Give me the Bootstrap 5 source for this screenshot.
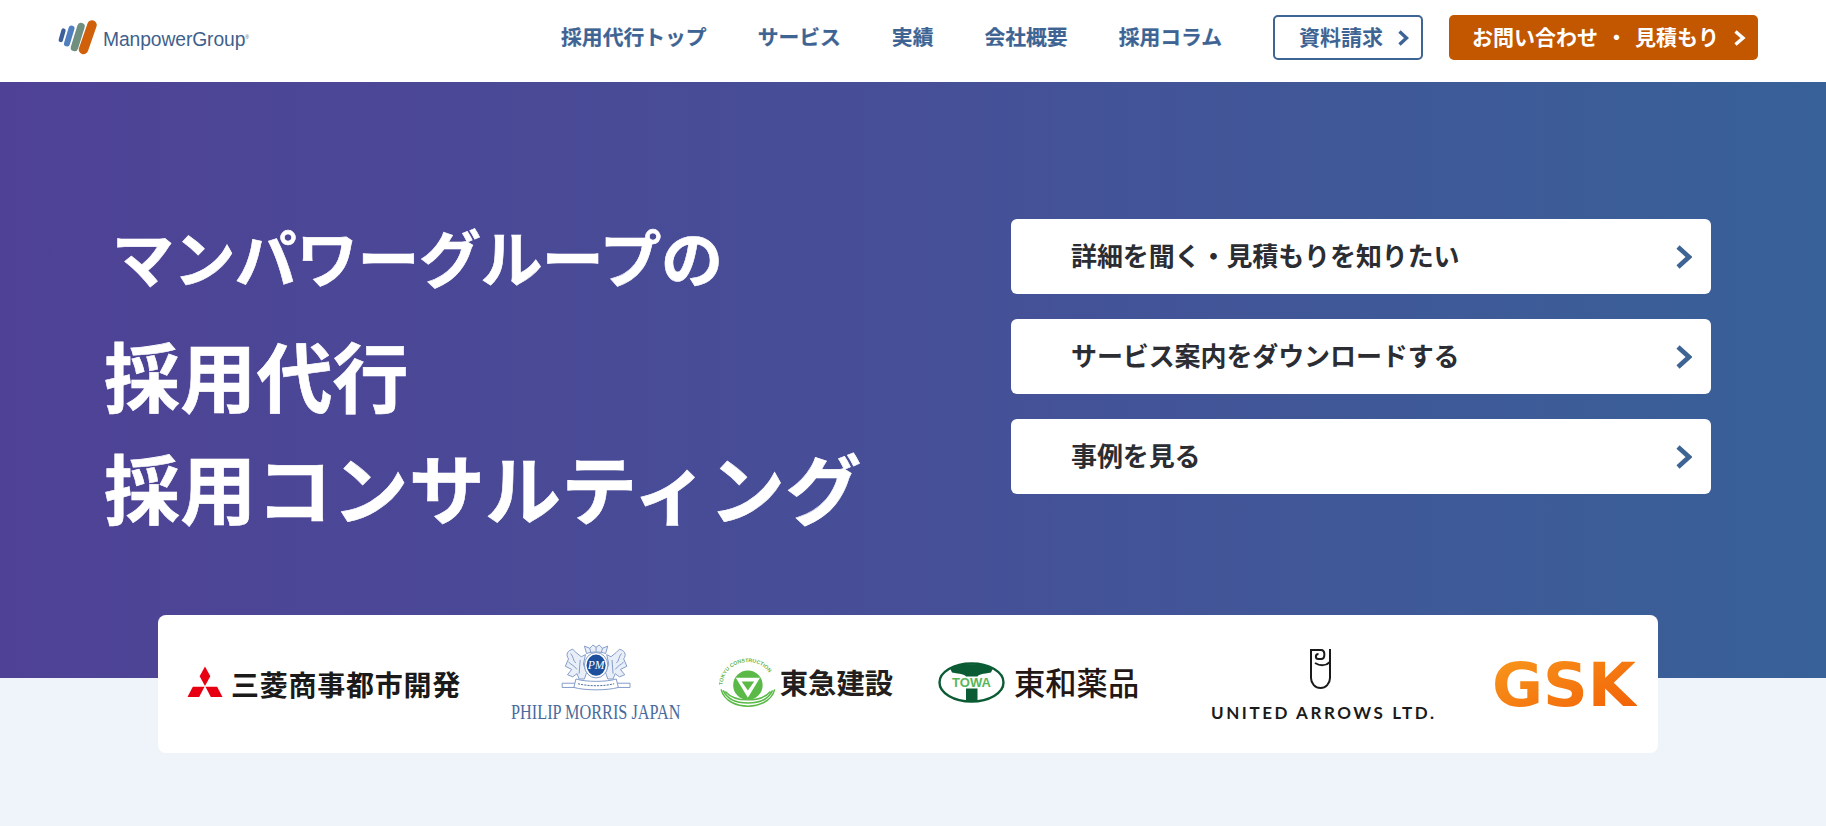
<!DOCTYPE html>
<html lang="ja">

<head>
    <meta charset="UTF-8">
    <meta name="viewport" content="width=device-width, initial-scale=1.0">
    <title>マンパワーグループの採用代行</title>
    <link href="https://cdn.jsdelivr.net/npm/bootstrap@5.3.0/dist/css/bootstrap.min.css" rel="stylesheet">
    <style>
        body { background: #eff4fb; font-family: "Noto Sans CJK JP", sans-serif; }

        .site-bar { height: 82px; padding: 15px 68px 22px 58px; align-items: center; flex-wrap: nowrap; }
        .site-brand { display: flex; align-items: flex-start; gap: 5px; margin: 0; padding: 0; }
        .brand-word { font: 19.3px "Liberation Sans", sans-serif; color: #3f5f8c; letter-spacing: -.1px; margin-top: 9px; }
        .brand-word sup { font-size: 5px; top: -1.4em; }
        .site-links { gap: 51px; margin-right: 51px; margin-bottom: 4px; }
        .site-bar.navbar-expand .site-links .nav-link { padding: 0; font-size: 20.8px; line-height: 30px; font-weight: 700; color: #3e6494; -webkit-text-stroke: .2px #3e6494; }
        .btn-doc, .btn-quote { height: 45px; font-size: 21px; font-weight: 700; border-radius: 5px; padding: 0 0 2px; display: flex; align-items: center; white-space: nowrap; }
        .btn-doc { width: 150px; border: 2px solid #3e6494; color: #3e6494; background: #fff; padding-left: 24px; }
        .btn-quote { width: 309px; margin-left: 26px; border: 0; background: #c25700; color: #fff; padding-left: 23px; }
        .btn-doc svg, .btn-quote svg { margin-left: 15px; margin-top: 2px; }

        .hero { display: flow-root; background: linear-gradient(90deg, #4f4296 0%, #464f97 50%, #386198 100%); padding-top: 137px; }
        .hero-title { margin: -3px 0 0 105px; color: #fff; font-weight: 700; -webkit-text-stroke: .6px #fff; }
        .title-sub { display: block; font-size: 62px; line-height: 80px; margin: 0 0 22px 7px; letter-spacing: -.6px; }
        .title-main { display: block; font-size: 76px; line-height: 112px; letter-spacing: .2px; margin-left: -1px; }
        .hero-links { width: 700px; margin-right: 115px; gap: 25px; }
        .hero-link { height: 75px; background: #fff; border: 0; border-radius: 6px; padding: 0 19px 0 60px; font-size: 26px; font-weight: 700; color: #2b2d33; }
        .hero-link span { position: relative; top: -2px; letter-spacing: -.1px; }
        .hero-link:hover { background: #fff; color: #2b2d33; }

        .logo-strip { width: 1500px; height: 138px; margin: 73px 0 -75px 158px; background: #fff; border-radius: 8px; position: relative; align-items: center; padding-left: 29px; }
        .logo-item { flex: none; display: flex; align-items: center; white-space: nowrap; }
        .logo-mitsu { width: 274px; gap: 8px; margin-right: 49px; font-size: 28px; font-weight: 700; letter-spacing: .75px; color: #1a1a1a; }
        .logo-mitsu svg { margin-top: -4px; }
        .logo-pm { width: 172px; margin-right: 37px; }
        .logo-tokyu { width: 174px; gap: 3px; margin-right: 45px; margin-top: -4px; font-size: 28.3px; font-weight: 700; color: #231f20; }
        .logo-towa { width: 202px; gap: 9px; margin-right: 71px; margin-top: -3px; font-size: 31.3px; font-weight: 500; color: #231815; }
        .logo-ua { width: 224px; margin-right: 57px; }
        .ua-mark { margin: 4px 6px 0 0; }
        .ua-word { margin-top: 13px; }
        .logo-gsk { width: 145px; }
    </style>
</head>

<body class="min-vh-100">
    <nav class="navbar navbar-expand bg-white site-bar">
        <a class="navbar-brand site-brand" href="#">
            <svg width="40" height="36" viewBox="0 0 40 36" fill="none" stroke-linecap="round">
                <path d="M5.500 10.500 2.800 20" stroke="#3c5f99" stroke-width="4.400" />
                <path d="M13.500 8.500 9 23.500" stroke="#4f7fbf" stroke-width="6" />
                <path d="M23 6.500 16.500 27.500" stroke="#6f8f80" stroke-width="7.500" />
                <path d="M34 5 25.500 29.500" stroke="#d0600a" stroke-width="9.500" />
            </svg>
            <span class="brand-word">ManpowerGroup<sup>®</sup></span>
        </a>
        <ul class="navbar-nav ms-auto site-links">
            <li class="nav-item"><a class="nav-link" href="#">採用代行トップ</a></li>
            <li class="nav-item"><a class="nav-link" href="#">サービス</a></li>
            <li class="nav-item"><a class="nav-link" href="#">実績</a></li>
            <li class="nav-item"><a class="nav-link" href="#">会社概要</a></li>
            <li class="nav-item"><a class="nav-link" href="#">採用コラム</a></li>
        </ul>
        <a class="btn btn-doc" href="#">資料請求
            <svg width="11" height="16" viewBox="0 0 11 16" fill="none" stroke="#3e6494" stroke-width="3.400"><path d="M1.500 1.500 8.500 8 1.500 14.500" /></svg>
        </a>
        <a class="btn btn-quote" href="#">お問い合わせ<span class="mx-2">・</span>見積もり
            <svg width="12" height="16" viewBox="0 0 12 16" fill="none" stroke="#fff" stroke-width="3.400"><path d="M1.500 1.500 9 8 1.500 14.500" /></svg>
        </a>
    </nav>

    <section class="hero">
        <div class="d-flex justify-content-between align-items-start">
            <h1 class="hero-title">
                <span class="title-sub">マンパワーグループの</span>
                <span class="title-main">採用代行</span>
                <span class="title-main">採用コンサルティング</span>
            </h1>
            <div class="d-flex flex-column hero-links">
                <a class="btn hero-link d-flex justify-content-between align-items-center" href="#"><span>詳細を聞く・見積もりを知りたい</span>
                    <svg width="16" height="24" viewBox="0 0 16 24" fill="none" stroke="#3e6494" stroke-width="4.600"><path d="M2 2 13 12 2 22" /></svg></a>
                <a class="btn hero-link d-flex justify-content-between align-items-center" href="#"><span>サービス案内をダウンロードする</span>
                    <svg width="16" height="24" viewBox="0 0 16 24" fill="none" stroke="#3e6494" stroke-width="4.600"><path d="M2 2 13 12 2 22" /></svg></a>
                <a class="btn hero-link d-flex justify-content-between align-items-center" href="#"><span>事例を見る</span>
                    <svg width="16" height="24" viewBox="0 0 16 24" fill="none" stroke="#3e6494" stroke-width="4.600"><path d="M2 2 13 12 2 22" /></svg></a>
            </div>
        </div>

        <div class="d-flex logo-strip">
            <div class="logo-item logo-mitsu">
                <svg width="37" height="32" viewBox="0 0 37 32" fill="#e60012">
                    <path d="M18.500 0 24 10 18.500 20 13 10Z" />
                    <path d="M18 21 12.500 31.500H0.500L6 21Z" />
                    <path d="M19 21H31L36.500 31.500H24.500Z" />
                </svg>
                <span>三菱商事都市開発</span>
            </div>
            <div class="logo-item logo-pm">
                <svg width="172" height="84" viewBox="0 0 172 84">
                    <g transform="translate(49 2) scale(1.060)" fill="#e9eff8" stroke="#7f98c6" stroke-width=".9">
                        <path d="M3 37H67V41H3Z" fill="#fff" />
                        <path d="M9 14C6 10 8 6 13 5L16 8 21 12 25 10 23 19 26 27 24 33H19L17 28 13 31 8 29 12 24 6 21Z" />
                        <path d="M61 14C64 10 62 6 57 5L54 8 49 12 45 10 47 19 44 27 46 33H51L53 28 57 31 62 29 58 24 64 21Z" />
                        <path d="M11 9C14 12 13 16 16 18M9 17C12 20 14 20 17 24M59 9C56 12 57 16 54 18M61 17C58 20 56 20 53 24M20 15 19 28M50 15 51 28" fill="none" />
                        <path d="M26 9 24 2 29 4 32 1 35 3 38 1 41 4 46 2 44 9C39 7 31 7 26 9Z" />
                        <path d="M29 4 30 8M35 3V7M41 4 40 8" fill="none" />
                        <path d="M16 33C25 36 45 36 54 33L56 41C45 44 25 44 14 41Z" fill="#fff" />
                        <path d="M18 37.500C28 40 42 40 52 37.500" stroke-dasharray="2 1" fill="none" stroke="#4a6a9c" />
                        <ellipse cx="35" cy="20" rx="11" ry="12" fill="#fff" />
                        <ellipse cx="35" cy="20" rx="9" ry="10" fill="#1c4f9c" stroke="none" />
                        <text x="35" y="24" text-anchor="middle" fill="#fff" stroke="none" font-family="Liberation Serif, serif" font-style="italic" font-size="11">PM</text>
                    </g>
                    <text transform="translate(1 77) scale(.775 1)" fill="#4a6a9c" font-family="Liberation Serif, serif" font-size="21">PHILIP MORRIS JAPAN</text>
                </svg>
            </div>
            <div class="logo-item logo-tokyu">
                <svg width="60" height="54" viewBox="0 -6 55 50" fill="none">
                    <defs><path id="tokyuArc" d="M3.500 22A24 22 0 0 1 51.500 22" /></defs>
                    <text font-size="5" fill="#5fb54a" font-family="Liberation Sans, sans-serif"><textPath href="#tokyuArc">TOKYU CONSTRUCTION</textPath></text>
                    <circle cx="27.500" cy="22" r="14" fill="#5ab947" />
                    <path d="M16 15H39L27.500 34Z" fill="#fff" />
                    <path d="M21.500 18.500H33.500L27.500 27Z" fill="#5ab947" />
                    <path d="M2 26C5 38 18 42 27.500 42S50 38 53 26M4 27C8 36 18 39 27.500 39S47 36 51 27M6 28C11 34 19 36 27.500 36S44 34 49 28" stroke="#5ab947" stroke-width="1.400" />
                </svg>
                <span>東急建設</span>
            </div>
            <div class="logo-item logo-towa">
                <svg width="67" height="41" viewBox="0 0 67 41">
                    <ellipse cx="33.500" cy="20.500" rx="32" ry="19" fill="#fff" stroke="#0b5c35" stroke-width="2.400" />
                    <path d="M12 6C22 1 45 1 55 6L53 10.500C45 12 40 12 39.500 15V40H28V15C27.500 12 22 12 14 10.500Z" fill="#0b5c35" />
                    <rect x="9" y="14.500" width="49" height="12" fill="#fff" />
                    <text x="33.500" y="25" text-anchor="middle" font-family="Liberation Sans, sans-serif" font-weight="700" font-size="13" fill="#58b65a">TOWA</text>
                </svg>
                <span>東和薬品</span>
            </div>
            <div class="logo-item logo-ua flex-column">
                <svg class="ua-mark" width="23" height="42" viewBox="0 0 23 42" fill="none" stroke="#1a1a1a" stroke-width="2">
                    <path d="M2 1V30A9.500 10 0 0 0 21 30V1" />
                    <path d="M2 2H12C16.500 2 16.500 11 12 11H9.500C6 11 6 6 9.500 6" />
                    <path d="M6 15C11 18 17 18 21 14" />
                </svg>
                <svg class="ua-word" width="224" height="22" viewBox="0 0 224 22">
                    <text x="0" y="16" fill="#1a1a1a" font-family="Lato, sans-serif" font-weight="700" font-size="17" textLength="223" lengthAdjust="spacing">UNITED ARROWS LTD.</text>
                </svg>
            </div>
            <div class="logo-item logo-gsk">
                <svg width="145" height="80" viewBox="0 0 145 80">
                    <defs>
                        <linearGradient id="gskFill" x1="0" y1="0" x2="1" y2="1">
                            <stop offset="0" stop-color="#f89b1e" />
                            <stop offset="1" stop-color="#f25c05" />
                        </linearGradient>
                    </defs>
                    <text x="0" y="62" fill="url(#gskFill)" font-family="DejaVu Sans, sans-serif" font-weight="700" font-size="60" textLength="144" lengthAdjust="spacingAndGlyphs">GSK</text>
                </svg>
            </div>
        </div>
    </section>

    <script src="https://cdn.jsdelivr.net/npm/bootstrap@5.3.0/dist/js/bootstrap.bundle.min.js"></script>
</body>

</html>
